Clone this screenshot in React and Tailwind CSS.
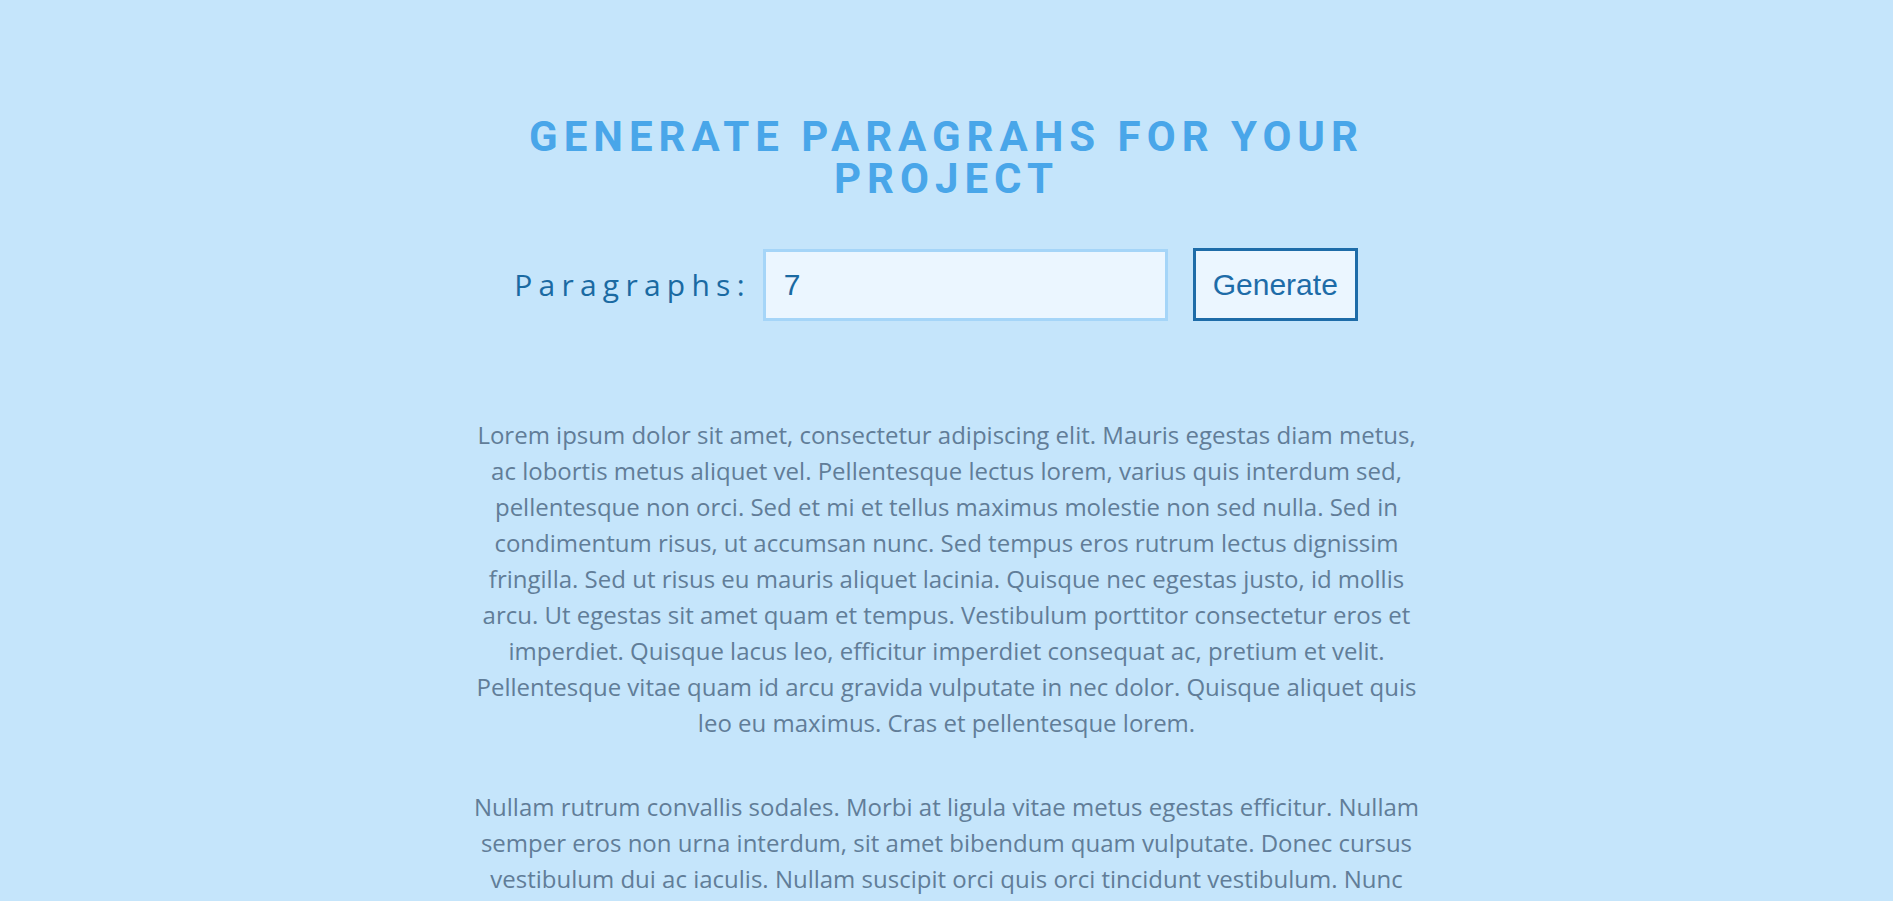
import React from "react";

const paragraphs = [
  "Lorem ipsum dolor sit amet, consectetur adipiscing elit. Mauris egestas diam metus, ac lobortis metus aliquet vel. Pellentesque lectus lorem, varius quis interdum sed, pellentesque non orci. Sed et mi et tellus maximus molestie non sed nulla. Sed in condimentum risus, ut accumsan nunc. Sed tempus eros rutrum lectus dignissim fringilla. Sed ut risus eu mauris aliquet lacinia. Quisque nec egestas justo, id mollis arcu. Ut egestas sit amet quam et tempus. Vestibulum porttitor consectetur eros et imperdiet. Quisque lacus leo, efficitur imperdiet consequat ac, pretium et velit. Pellentesque vitae quam id arcu gravida vulputate in nec dolor. Quisque aliquet quis leo eu maximus. Cras et pellentesque lorem.",
  "Nullam rutrum convallis sodales. Morbi at ligula vitae metus egestas efficitur. Nullam semper eros non urna interdum, sit amet bibendum quam vulputate. Donec cursus vestibulum dui ac iaculis. Nullam suscipit orci quis orci tincidunt vestibulum. Nunc vitae ante ut neque fringilla dignissim. Suspendisse potenti. Ut hendrerit quam sed neque aliquam, at laoreet lectus congue. Curabitur sit amet lacus a lectus tincidunt aliquam. Praesent posuere tempus luctus.",
  "Phasellus bibendum turpis vitae magna congue, a tristique risus sodales. Vestibulum ac mauris eget ligula egestas vulputate. Fusce pellentesque sapien quis ligula faucibus, vel vehicula lectus finibus. Nam in nunc at libero posuere luctus. Proin dignissim, justo in vulputate sollicitudin, ligula eros pretium leo, vel faucibus urna lacus in mauris.",
  "Donec at massa ut mi molestie faucibus. Ut sit amet lorem eget lectus placerat hendrerit. Integer vel neque eget mauris congue venenatis. Aliquam erat volutpat. Curabitur sed tellus at diam sagittis porttitor. Nam vulputate sem at mauris pulvinar, non lacinia tortor accumsan.",
  "Vivamus eu lacus sed mi pharetra aliquet. Mauris pretium ante vel nisi sodales, eget ultricies nunc tincidunt. Morbi id libero a erat fermentum dictum. Etiam suscipit erat ac nibh porta, a ullamcorper neque malesuada.",
  "Sed vitae sem nec risus tempus maximus. Nulla facilisi. Maecenas eleifend, sapien eu euismod sodales, massa leo gravida lectus, vitae feugiat libero nunc a purus. Praesent sed arcu eu est cursus fringilla.",
  "Aenean in dui id mauris lacinia ultricies. Cras rhoncus elit vel metus iaculis, ut tristique lorem porta. Ut semper neque vitae lacus fermentum, sit amet facilisis nisl pretium. Quisque in ipsum a mi vulputate commodo."
];

export default function App() {
  return (
    <div className="min-h-screen w-full bg-[#c5e5fb] pt-[116px] font-['Open_Sans',sans-serif]">
      <section className="mx-auto w-[90vw] max-w-[960px] text-center">
        <h3 className="font-['Roboto',sans-serif] text-[42px] leading-[42px] font-bold uppercase tracking-[6px] text-[#49a6e9]">
          Generate paragrahs for your project
        </h3>
        <form
          className="mt-[48px] mb-[96px] flex items-center justify-center pr-[21px]"
          onSubmit={(e) => e.preventDefault()}
        >
          <label className="text-[30px] tracking-[6.25px] text-[#1a6aa2] capitalize">
            paragraphs:
          </label>
          <input
            type="text"
            defaultValue="7"
            className="ml-[12px] h-[72px] w-[405px] border-[3px] border-[#a5d5f8] bg-[#ebf6ff] px-[18px] font-['Liberation_Sans',Arial,sans-serif] text-[30px] text-[#1a6aa2] outline-none"
          />
          <button
            type="submit"
            className="ml-[25px] h-[73px] w-[165px] border-[3px] border-[#1e6ca8] bg-[#ebf6ff] font-['Liberation_Sans',Arial,sans-serif] text-[30px] text-[#1e6ca8]"
          >
            Generate
          </button>
        </form>
        <article className="flex flex-col gap-[48px]">
          {paragraphs.map((p, i) => (
            <p key={i} className="text-[24px] leading-[36px] text-[#617d98]">
              {p}
            </p>
          ))}
        </article>
      </section>
    </div>
  );
}
